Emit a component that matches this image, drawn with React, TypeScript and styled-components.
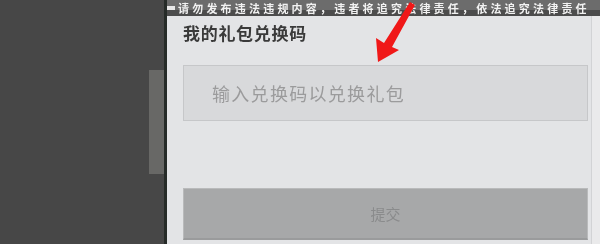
import React from "react";
import styled, { createGlobalStyle } from "styled-components";

const Global = createGlobalStyle`
  html, body { margin: 0; padding: 0; background: #474747; overflow: hidden; }
  body { font-family: "Noto Sans CJK SC", "Noto Sans", sans-serif; }
  * { box-sizing: border-box; }
`;

const Page = styled.div`
  position: relative;
  display: flex;
  width: 600px;
  height: 244px;
  background: #474747;
  overflow: hidden;
`;

const LeftPane = styled.div`
  width: 164px;
  flex-shrink: 0;
  display: flex;
  justify-content: flex-end;
  align-items: flex-start;
  background: #474747;
`;

const Handle = styled.div`
  width: 15px;
  height: 104px;
  margin-top: 70px;
  background: #686866;
`;

const Divider = styled.div`
  width: 3px;
  flex-shrink: 0;
  background: #262b28;
`;

const Main = styled.div`
  flex: 1;
  min-width: 0;
  display: flex;
  flex-direction: column;
`;

const TopStrip = styled.div`
  height: 16px;
  flex-shrink: 0;
  display: flex;
  align-items: center;
  gap: 3px;
  background: linear-gradient(#6c6c6c 0 10px, #4c4c4c 10px 16px);
`;

const StripMark = styled.div`
  width: 8px;
  height: 4px;
  flex-shrink: 0;
  background: #e8e8e8;
  filter: blur(0.6px);
`;

const StripText = styled.div`
  font-size: 11px;
  line-height: 14px;
  font-weight: 700;
  letter-spacing: 3.2px;
  color: #f2f2f2;
  white-space: nowrap;
  filter: blur(0.6px);
`;

const Body = styled.div`
  flex: 1;
  display: flex;
`;

const Dialog = styled.div`
  width: 425px;
  flex-shrink: 0;
  padding: 6px 3px 0 16px;
  display: flex;
  flex-direction: column;
  background: #e3e4e6;
  border-right: 1px solid #d2d3d5;
`;

const Edge = styled.div`
  flex: 1;
  background: #eaeaeb;
`;

const Title = styled.div`
  font-size: 17px;
  line-height: 22px;
  font-weight: 700;
  color: #3a3a3a;
  letter-spacing: 0.7px;
  filter: blur(0.5px);
`;

const Input = styled.div`
  margin-top: 21px;
  height: 56px;
  border: 1px solid #c6c7c9;
  background: #d8d9db;
  display: flex;
  align-items: center;
  padding-left: 28px;
`;

const Placeholder = styled.span`
  font-size: 18px;
  letter-spacing: 1.3px;
  color: #9b9b9c;
  filter: blur(0.5px);
`;

const Button = styled.div`
  margin-top: 67px;
  height: 52px;
  border: 1px solid #b9babb;
  border-bottom: 2px solid #9a9b9c;
  background: #a7a8a9;
  display: flex;
  align-items: center;
  justify-content: center;
`;

const ButtonLabel = styled.span`
  font-size: 15px;
  color: #8a8b8c;
  filter: blur(0.5px);
`;

const Arrow = styled.svg`
  position: absolute;
  left: 0;
  top: 0;
  pointer-events: none;
`;

export default function App() {
  return (
    <>
      <Global />
      <Page>
        <LeftPane>
          <Handle />
        </LeftPane>
        <Divider />
        <Main>
          <TopStrip>
            <StripMark />
            <StripText>请勿发布违法违规内容，违者将追究法律责任，依法追究法律责任</StripText>
          </TopStrip>
          <Body>
            <Dialog>
              <Title>我的礼包兑换码</Title>
              <Input>
                <Placeholder>输入兑换码以兑换礼包</Placeholder>
              </Input>
              <Button>
                <ButtonLabel>提交</ButtonLabel>
              </Button>
            </Dialog>
            <Edge />
          </Body>
        </Main>
        <Arrow width="600" height="244" viewBox="0 0 600 244">
          <polygon
            points="410,2 415,5 392,47 399,50 378,62 376,38 384,43"
            fill="#f01818"
          />
        </Arrow>
      </Page>
    </>
  );
}
